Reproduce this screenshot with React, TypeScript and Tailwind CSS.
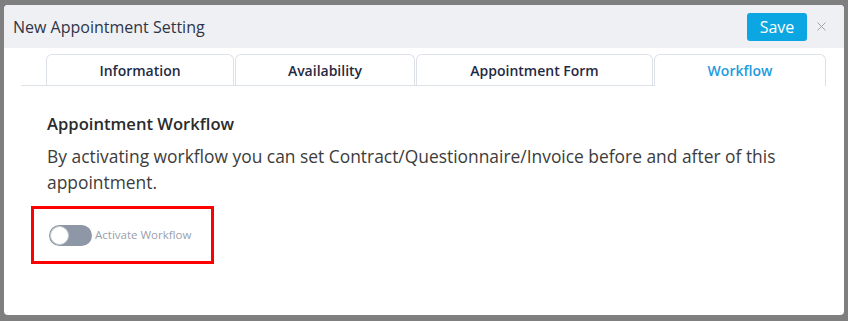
import { X } from 'lucide-react';

const TABS = [
  { label: 'Information', width: 'w-[188px]' },
  { label: 'Availability', width: 'w-[180px]' },
  { label: 'Appointment Form', width: 'w-[237px]' },
  { label: 'Workflow', width: 'w-[172px]', active: true },
];

export default function App() {
  return (
    <div className="w-[848px] h-[321px] bg-[#7f7f7f] pt-[5px] pl-[4px] font-['Open_Sans',sans-serif]">
      <div className="w-[840px] h-[310px] bg-white rounded-[4px] overflow-hidden">
        {/* header */}
        <div className="h-[43px] bg-[#eef0f3] flex items-center pl-[9px] pr-[15px]">
          <h1 className="text-[16px] text-[#2f3548]">New Appointment Setting</h1>
          <div className="ml-auto flex items-center gap-[7px]">
            <button className="h-[28px] w-[60px] rounded-[3px] bg-[#0ca6e2] text-white text-[16px]">Save</button>
            <X className="w-[15px] h-[15px] text-[#9aa0a6]" strokeWidth={1.5} />
          </div>
        </div>

        {/* tabs */}
        <div className="flex pl-[17px] pt-[6px]">
          <div className="flex items-end border-b border-[#dde2e8] pl-[25px]">
            {TABS.filter((t) => !t.active).map((t) => (
              <div
                key={t.label}
                className={`${t.width} h-[31px] mr-[1px] flex items-center justify-center border border-b-0 border-[#dde2e8] rounded-t-[6px] text-[14px] font-semibold text-[#1f2a44]`}
              >
                {t.label}
              </div>
            ))}
          </div>
          {TABS.filter((t) => t.active).map((t) => (
            <div
              key={t.label}
              className={`${t.width} h-[32px] flex items-center justify-center border border-b-0 border-[#dde2e8] rounded-t-[6px] text-[14px] font-semibold text-[#1d9be0]`}
            >
              {t.label}
            </div>
          ))}
        </div>

        {/* content */}
        <div className="pl-[43px] pr-[30px] pt-[25px]">
          <h2 className="text-[16.6px] font-semibold text-[#2b2b2b] leading-[26px]">Appointment Workflow</h2>
          <p className="mt-[6px] text-[17.4px] text-[#3c3c3c] leading-[26px]">
            By activating workflow you can set Contract/Questionnaire/Invoice before and after of this appointment.
          </p>
        </div>
        <div className="ml-[27px] mt-[11px] w-[183px] h-[58px] border-[3px] border-[#ff0000] flex items-center pl-[15px]">
          <div className="w-[43px] h-[21px] rounded-full bg-[#8d97a5] p-[1px] flex items-center">
            <div className="w-[19px] h-[19px] rounded-full bg-white border border-[#c9ced6]" />
          </div>
          <span className="ml-[3px] text-[11.5px] text-[#98a1ad]">Activate Workflow</span>
        </div>
      </div>
    </div>
  );
}
